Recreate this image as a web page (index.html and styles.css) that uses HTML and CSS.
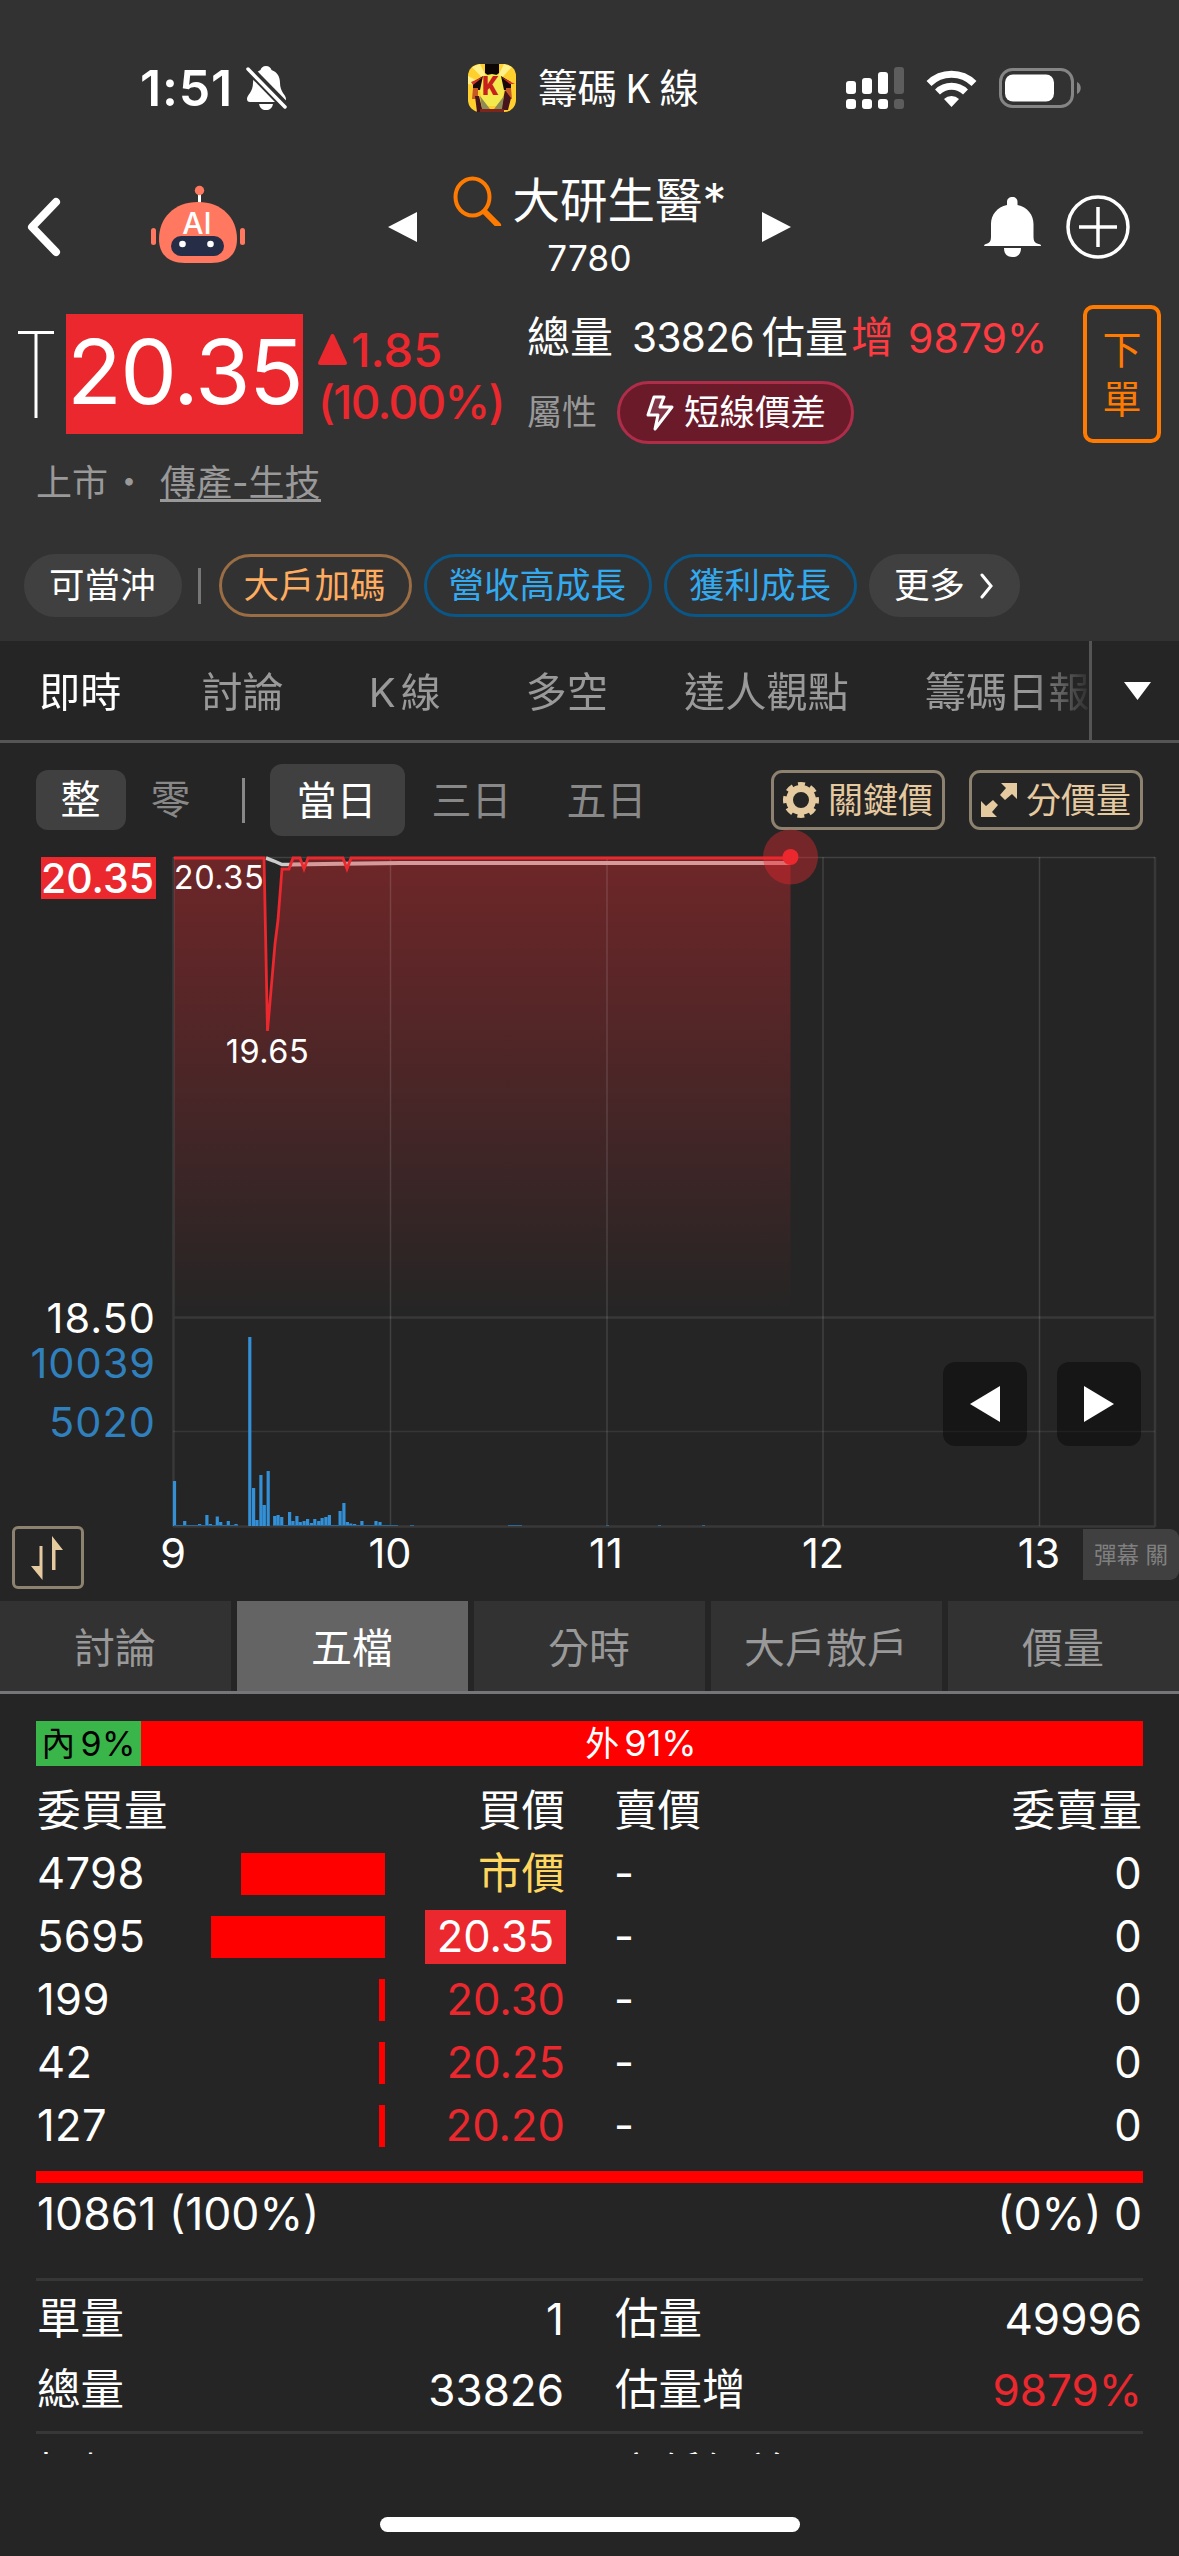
FILE: index.html
```html
<!DOCTYPE html>
<html lang="zh-Hant">

<head>
    <meta charset="UTF-8">
    <meta name="viewport" content="width=device-width, initial-scale=1.0">
    <title>大研生醫* 7780</title>
    <link rel="stylesheet" href="styles.css">
</head>

<body>
    <div class="header">
        <div class="status-bar">
            <span class="time">1:51</span>
            <svg class="mute" width="42" height="46" viewBox="0 0 42 46">
                <path d="M20 1c3 0 5 2 5.500 4 6 2 8.500 7 8.500 13 0 9 6 12 6 16 0 2-1 3-3 3H4c-2 0-3-1-3-3 0-4 6-7 6-16 0-6 2.500-11 7.500-13C15 3 17 1 20 1z" fill="#fff" />
                <path d="M13 39h14c-1 4-3 6-7 6s-6-2-7-6z" fill="#fff" />
                <path d="M0 1l43 44" stroke="#323232" stroke-width="9" />
                <path d="M2 4l37 38" stroke="#fff" stroke-width="3.500" stroke-linecap="round" />
            </svg>
            <svg class="app-icon" width="48" height="48" viewBox="0 0 48 48">
                <rect width="48" height="48" rx="12" fill="#ffcf2e" />
                <path d="M24 24L4 3l8-3zM24 24L36 0l8 3zM24 24L0 20v-8z" fill="#fff08a" />
                <path d="M17 0h14v9l-4 3h-6l-4-3z" fill="#0c0705" />
                <path d="M14 12l10-2 10 2 3 10-4 20H15l-4-20z" fill="#f3e84c" />
                <path d="M15 12L5 18v8l7 0zM33 12l10 6v8l-7 0z" fill="#18090c" />
                <path d="M3 18l12-5-10 8zM33 13l14 7-5 0z" fill="#d8332a" />
                <path d="M5 24h5v11H4zM38 24h5l1 11h-6z" fill="#c65a25" />
                <path d="M7 32l4 0 4 16H9zM37 26l6 8-3 12-7 0z" fill="#45141d" />
                <path d="M12 32l10 13H14zM36 32L26 45h8z" fill="#8e8a55" />
                <path d="M12 45h24v3H12z" fill="#7d241c" />
                <text class="icon-k" x="22" y="31">K</text>
            </svg>
            <span class="app-name">籌碼<span class="app-k">K</span>線</span>
            <svg class="signal" width="58" height="42" viewBox="0 0 58 42">
                <g fill="#fff">
                    <rect x="0" y="14" width="10" height="13" rx="3" />
                    <rect x="16" y="11" width="10" height="16" rx="3" />
                    <rect x="32" y="5" width="10" height="22" rx="3" />
                    <rect x="0" y="32" width="10" height="10" rx="3" />
                    <rect x="16" y="32" width="10" height="10" rx="3" />
                    <rect x="32" y="32" width="10" height="10" rx="3" />
                </g>
                <g fill="#5d5d5d">
                    <rect x="48" y="0" width="10" height="27" rx="3" />
                    <rect x="48" y="32" width="10" height="10" rx="3" />
                </g>
            </svg>
            <svg class="wifi" width="51" height="38" viewBox="0 0 51 38">
                <g fill="none" stroke="#fff" stroke-width="7">
                    <path d="M3 14.500a32 32 0 0 1 45 0" />
                    <path d="M11.500 23a20 20 0 0 1 28 0" />
                </g>
                <path d="M18 30a11 11 0 0 1 15 0L25.500 38z" fill="#fff" />
            </svg>
            <svg class="battery" width="83" height="40" viewBox="0 0 83 40">
                <rect x="1.500" y="1.500" width="72" height="37" rx="12" fill="none" stroke="#858585" stroke-width="3" />
                <rect x="6" y="6.500" width="49" height="27" rx="8" fill="#fff" />
                <path d="M78 14c5 2 5 10 0 12z" fill="#858585" />
            </svg>
        </div>

        <div class="nav">
            <svg class="back" width="34" height="60" viewBox="0 0 34 60">
                <path d="M29 5L5 30l24 25" fill="none" stroke="#fff" stroke-width="8" stroke-linecap="round" stroke-linejoin="round" />
            </svg>
            <svg class="robot" width="96" height="80" viewBox="0 0 96 80">
                <path d="M48.500 8v12" stroke="#fff" stroke-width="3" />
                <circle cx="48.500" cy="5.500" r="4.700" fill="#ff785f" />
                <rect x="0" y="43" width="5" height="17" rx="2.500" fill="#ff785f" />
                <rect x="89" y="43" width="5" height="17" rx="2.500" fill="#ff785f" />
                <path d="M47 17c24 0 39 16 39 37 0 16-10 24-26 24H34C18 78 8 70 8 54 8 33 23 17 47 17z" fill="#ff785f" />
                <rect x="20" y="51" width="53" height="20" rx="10" fill="#262d47" />
                <circle cx="31.500" cy="59" r="3.300" fill="#fff" />
                <circle cx="59.500" cy="59" r="3.300" fill="#fff" />
                <text class="robot-ai" x="46" y="49">AI</text>
            </svg>
            <svg class="prev" width="29" height="30" viewBox="0 0 29 30">
                <path d="M29 0v30L0 15z" fill="#fff" />
            </svg>
            <div class="stock">
                <div class="stock-name">
                    <svg width="50" height="50" viewBox="0 0 50 50">
                        <ellipse cx="19.500" cy="21" rx="17" ry="18.500" fill="none" stroke="#ff7a00" stroke-width="4" />
                        <path d="M32 36l13 13" stroke="#ff7a00" stroke-width="6" stroke-linecap="round" />
                    </svg>
                    <span>大研生醫*</span>
                </div>
                <div class="stock-code">7780</div>
            </div>
            <svg class="next" width="29" height="30" viewBox="0 0 29 30">
                <path d="M0 0v30l29-15z" fill="#fff" />
            </svg>
            <svg class="bell" width="58" height="60" viewBox="0 0 58 60">
                <path d="M28.500 0c3 0 5 2 5 5v3c10 2 16 10 16 19v12c0 5 1 7 5 8 3 .500 3 2 2 2H1c-1.500 0-1-1.500 1-2 4-1 5-3 5-8V27c0-9 6-17 16-19V5c0-3 2-5 5.500-5z" fill="#fff" />
                <path d="M20 51h17c0 6-3 9-8.500 9S20 57 20 51z" fill="#fff" />
            </svg>
            <svg class="plus" width="64" height="64" viewBox="0 0 64 64">
                <circle cx="32" cy="32" r="30" fill="none" stroke="#fff" stroke-width="3.500" />
                <path d="M13 32h38M32 12v40" stroke="#fff" stroke-width="3.500" />
            </svg>
        </div>

        <div class="quote">
            <svg class="candle" width="36" height="87" viewBox="0 0 36 87">
                <path d="M0 1.500h36M18 0v87" stroke="#fff" stroke-width="3" />
            </svg>
            <div class="price">20.35</div>
            <div class="change">
                <div>
                    <svg width="29" height="31" viewBox="0 0 29 31">
                        <path d="M14.500 2L27 29H2z" fill="#ea282e" stroke="#ea282e" stroke-width="4" stroke-linejoin="round" />
                    </svg>
                    <span>1.85</span>
                </div>
                <div class="percent">(10.00%)</div>
            </div>
            <div class="volume">
                <div class="volume-line">總量<span class="total">33826</span>估量<span class="up">增 <b>9879%</b></span></div>
                <div class="attr">
                    <span class="attr-label">屬性</span>
                    <span class="attr-pill">
                        <svg width="30" height="36" viewBox="0 0 30 36">
                            <path d="M9 2h10l-4 10h12L10 34l3-14H3z" fill="#833648" stroke="#fff" stroke-width="3" stroke-linejoin="round" />
                        </svg>
                        短線價差
                    </span>
                </div>
            </div>
            <div class="order-btn"><span>下</span><span>單</span></div>
        </div>

        <div class="industry">上市<span class="dot">・</span><span class="link">傳產-生技</span></div>

        <div class="chips">
            <span class="chip solid">可當沖</span>
            <span class="chip-divider"></span>
            <span class="chip orange">大戶加碼</span>
            <span class="chip blue">營收高成長</span>
            <span class="chip blue">獲利成長</span>
            <span class="chip solid">更多
                <svg width="14" height="26" viewBox="0 0 14 26">
                    <path d="M2 2l9 11-9 11" fill="none" stroke="#fff" stroke-width="3" stroke-linecap="round" />
                </svg>
            </span>
        </div>
    </div>

    <div class="tabs">
        <div class="tab-list">
            <span class="tab active">即時</span>
            <span class="tab discuss">討論</span>
            <span class="tab k-line">K<i></i>線</span>
            <span class="tab">多空</span>
            <span class="tab">達人觀點</span>
            <span class="tab">籌碼日報</span>
        </div>
        <div class="tab-more">
            <svg width="27" height="18" viewBox="0 0 27 18">
                <path d="M0 0h27L13.500 18z" fill="#fff" />
            </svg>
        </div>
    </div>

    <div class="controls">
        <span class="lot active">整</span>
        <span class="lot">零</span>
        <span class="controls-divider"></span>
        <span class="period active">當日</span>
        <span class="period">三日</span>
        <span class="period">五日</span>
        <span class="tool first">
            <svg width="36" height="36" viewBox="0 0 36 36">
                <circle cx="18" cy="18" r="11.500" fill="none" stroke="#e5caa0" stroke-width="7" />
                <circle cx="18" cy="18" r="16" fill="none" stroke="#e5caa0" stroke-width="4" stroke-dasharray="7 5.566" stroke-dashoffset="3.500" />
            </svg>
            關鍵價
        </span>
        <span class="tool">
            <svg width="36" height="36" viewBox="0 0 36 36">
                <g fill="#e5caa0">
                    <path d="M20 1h16v16l-5-5-7 6-5-5 6-7z" />
                    <path d="M16 35H0V19l5 5 7-6 5 5-6 7z" />
                </g>
            </svg>
            分價量
        </span>
    </div>

    <div class="chart">
        <svg class="plot" width="1179" height="759" viewBox="0 842 1179 759">
            <defs>
                <linearGradient id="fade" x1="0" y1="0" x2="0" y2="1">
                    <stop offset="0" stop-color="#ea282e" stop-opacity="0.37" />
                    <stop offset="1" stop-color="#ea282e" stop-opacity="0" />
                </linearGradient>
            </defs>

            <path d="M174 857.500h90l3.500 174 7.500-87 3-24 4-51h7l4-11.500h7l4 11.500 4-11.500h35l4 11.500 4-11.500h439.500V1316H174z" fill="url(#fade)" />

            <!-- grid -->
            <g fill="none" stroke="#fff" stroke-opacity="0.130" stroke-width="1.500">
                <path d="M173 857.500h982" />
                <path d="M390.500 857v669M607 857v669M823 857v669M1039.500 857v669" />
                <path d="M173 1431.500h982" stroke-opacity="0.080" />
                <path d="M173.500 857v670M1155 857v670M173 1317.500h982M173 1526.500h982" stroke-opacity="0.090" stroke-width="2.500" />
            </g>

            <!-- average price -->
            <path d="M266 858l8 3 8 3.500h10" fill="none" stroke="#ccc" stroke-width="3.500" />
            <path d="M291 864.500l50-.800 60-.700h389.500" fill="none" stroke="#d69a9b" stroke-width="4" />
            <path d="M174 858h90l3.500 173 7.500-87 3-24 4-51h7l4-11 7 0 4 11 4-11h35l4 11 4-11h439" fill="none" stroke="#ea282e" stroke-width="2.800" />

            <circle cx="790.500" cy="857" r="27.500" fill="#ea282e" fill-opacity="0.400" />
            <circle cx="790.500" cy="857" r="8" fill="#ea282e" />

            <!-- volume bars -->
            <path d="M174.500 1526v-45M184.700 1526v-5M199.600 1526v-2M206.900 1526v-11M210.400 1526v-2M217.300 1526v-9.500M220.700 1526v-4M228.300 1526v-5M236 1526v-2M249.800 1526v-189M253.600 1526v-38M257 1526v-6M260.900 1526v-51M264.300 1526v-21M268.200 1526v-55M274.700 1526v-10M278.100 1526v-11M281.700 1526v-9M289.600 1526v-14M293 1526v-5M296.900 1526v-10M300.300 1526v-4M304.100 1526v-5M307.600 1526v-7M311.400 1526v-3M314.800 1526v-7M318.700 1526v-5M322.100 1526v-8M325.900 1526v-9M329.400 1526v-11M340.100 1526v-15M343.900 1526v-23M347.400 1526v-4M350.800 1526v-2.500M354.600 1526v-2M361.900 1526v-5M376 1526v-5M380 1526v-4" stroke="#338fd6" stroke-width="3.200" />
            <path d="M174 1525.500h63M273 1525.500h125M410 1525.500h4M508 1525.500h14M606 1525.500h3M658 1525.500h3M702 1525.500h3" stroke="#2a6898" stroke-width="1.200" />

            <rect x="41" y="857" width="115" height="42" fill="#ea282e" />
            <g class="axis-y">
                <text class="top" x="154" y="893">20.35</text>
                <text x="156" y="1333">18.50</text>
                <text class="vol" x="156" y="1378">10039</text>
                <text class="vol" x="156" y="1437">5020</text>
            </g>
            <g class="axis-x">
                <text x="173" y="1568">9</text>
                <text x="390" y="1568">10</text>
                <text x="606" y="1568">11</text>
                <text x="823" y="1568">12</text>
                <text x="1039" y="1568">13</text>
            </g>
            <g class="mark">
                <text x="219" y="889">20.35</text>
                <text x="267.500" y="1063">19.65</text>
            </g>
        </svg>
        <div class="step left">
            <svg width="30" height="36" viewBox="0 0 30 36">
                <path d="M30 0v36L0 18z" fill="#fff" />
            </svg>
        </div>
        <div class="step right">
            <svg width="30" height="36" viewBox="0 0 30 36">
                <path d="M0 0v36l30-18z" fill="#fff" />
            </svg>
        </div>
        <div class="swap">
            <svg width="34" height="44" viewBox="0 0 34 44">
                <path d="M8.500 10h3v34L0 30h8.500zM21 0v34h3.500V14H32z" fill="#e5caa0" />
            </svg>
        </div>
        <div class="danmu">彈幕 關</div>
    </div>

    <div class="panel-tabs">
        <div class="panel-tab">討論</div>
        <div class="panel-tab active">五檔</div>
        <div class="panel-tab">分時</div>
        <div class="panel-tab">大戶散戶</div>
        <div class="panel-tab">價量</div>
    </div>

    <div class="book">
        <div class="ratio">
            <div class="inner">內<span>9%</span></div>
            <div class="outer">外<span>91%</span></div>
        </div>

        <div class="row head">
            <span class="qty">委買量</span><span class="bar-cell"></span><span class="bid">買價</span>
            <span class="ask">賣價</span><span class="ask-qty">委賣量</span>
        </div>
        <div class="row">
            <span class="qty">4798</span><span class="bar-cell"><i class="bar" style="width: 144px"></i></span><span class="bid market">市價</span>
            <span class="ask">-</span><span class="ask-qty">0</span>
        </div>
        <div class="row">
            <span class="qty">5695</span><span class="bar-cell"><i class="bar" style="width: 174px"></i></span><span class="bid limit">20.35</span>
            <span class="ask">-</span><span class="ask-qty">0</span>
        </div>
        <div class="row">
            <span class="qty">199</span><span class="bar-cell"><i class="bar" style="width: 6px"></i></span><span class="bid">20.30</span>
            <span class="ask">-</span><span class="ask-qty">0</span>
        </div>
        <div class="row">
            <span class="qty">42</span><span class="bar-cell"><i class="bar" style="width: 6px"></i></span><span class="bid">20.25</span>
            <span class="ask">-</span><span class="ask-qty">0</span>
        </div>
        <div class="row">
            <span class="qty">127</span><span class="bar-cell"><i class="bar" style="width: 6px"></i></span><span class="bid">20.20</span>
            <span class="ask">-</span><span class="ask-qty">0</span>
        </div>

        <div class="total-bar"></div>
        <div class="totals"><span>10861 (100%)</span><span>(0%) 0</span></div>

        <div class="stats">
            <div class="stat"><span>單量</span><span class="num">1</span></div>
            <div class="stat"><span>估量</span><span class="num">49996</span></div>
            <div class="stat"><span>總量</span><span class="num">33826</span></div>
            <div class="stat"><span>估量增</span><span class="num red">9879%</span></div>
        </div>
        <div class="stats clipped">
            <div class="stat"><span>振幅</span></div>
            <div class="stat"><span>高低價差</span></div>
        </div>
    </div>

    <div class="home"><div class="home-bar"></div></div>
</body>

</html>
```

FILE: styles.css
```css
* {
    box-sizing: border-box;
}

body {
    margin: 0;
    width: 1179px;
    height: 2556px;
    overflow: hidden;
    background: #252525;
    color: #fff;
    font-family: Inter, "Noto Sans CJK TC", sans-serif;
    font-size: 42px;
    line-height: 1;
    white-space: nowrap;
}

svg {
    display: block;
    flex-shrink: 0;
}

.header {
    height: 641px;
    background: #323232;
}

/* status bar */
.status-bar {
    display: flex;
    align-items: center;
    height: 153px;
    padding: 23px 0 0 140px;
}

.time {
    width: 106px;
    font-size: 50px;
    font-weight: 600;
    letter-spacing: 0.8px;
}

.app-icon {
    margin-left: 180px;
}

.icon-k {
    font: 900 25px Roboto, sans-serif;
    fill: #c8201c;
    text-anchor: middle;
}

.app-name {
    width: 308px;
    margin-left: 22px;
    font-size: 39.5px;
}

.app-k {
    margin: 0 9px 0 8px;
    font-family: "Noto Sans CJK TC", sans-serif;
}

.wifi {
    margin-left: 22px;
}

.battery {
    margin-left: 22px;
}

/* nav */
.nav {
    display: flex;
    align-items: center;
    height: 148px;
    padding-left: 27px;
}

.robot {
    margin: -4px 0 0 90px;
}

.robot-ai {
    font-size: 30px;
    font-weight: 500;
    fill: #fff;
    text-anchor: middle;
}

.prev {
    margin-left: 141px;
}

.stock {
    width: 345px;
    margin-top: -6px;
    text-align: center;
}

.stock-name {
    display: flex;
    justify-content: center;
    align-items: center;
    gap: 10px;
    height: 56px;
    font-size: 47.5px;
}

.stock-code {
    margin-top: 12px;
    font-size: 35px;
    letter-spacing: 0.3px;
}

.bell {
    margin-left: 193px;
}

.plus {
    margin-left: 24px;
}

/* quote */
.quote {
    display: flex;
    align-items: center;
    height: 138px;
    margin-top: 4px;
    padding-left: 18px;
}

.price {
    width: 237px;
    height: 120px;
    margin-left: 12px;
    background: #ea282e;
    font-size: 90px;
    line-height: 116px;
    letter-spacing: -1.6px;
    text-align: center;
}

.change {
    width: 209px;
    margin-left: 15px;
    padding-top: 3px;
    color: #ea282e;
    font-size: 47px;
    font-weight: 500;
}

.change div {
    display: flex;
    align-items: center;
    gap: 4px;
    height: 53px;
}

.change .percent {
    font-size: 46px;
    letter-spacing: -1.7px;
}

.volume {
    width: 556px;
    height: 138px;
}

.volume-line {
    display: flex;
    height: 64px;
    font-size: 43px;
    line-height: 65px;
}

.volume-line .total {
    margin: 0 8px 0 19px;
    font-size: 40.5px;
    letter-spacing: -0.6px;
}

.volume-line .up {
    margin-left: 3px;
    color: #ff3b42;
}

.volume-line b {
    margin-left: 2px;
    font-size: 41px;
    font-weight: 400;
}

.attr {
    display: flex;
    align-items: center;
    margin-top: 12px;
    font-size: 35px;
}

.attr-label {
    width: 90px;
    color: #999;
}

.attr-pill {
    display: flex;
    align-items: center;
    gap: 9px;
    height: 63px;
    padding: 0 25px;
    border: 3px solid #b02d4a;
    border-radius: 32px;
    background: #6b1a2a;
    font-size: 35.5px;
}

.order-btn {
    display: flex;
    flex-direction: column;
    align-items: center;
    justify-content: center;
    gap: 10px;
    width: 78px;
    height: 138px;
    border: 4px solid #ff7a00;
    border-radius: 10px;
    color: #ff7a00;
    font-size: 39px;
}

.industry {
    display: flex;
    height: 60px;
    margin-top: 11px;
    padding-left: 36px;
    color: #999;
    font-size: 36px;
    line-height: 58px;
}

.industry .dot {
    width: 52px;
    padding-left: 3px;
}

.industry .link {
    height: 48px;
    border-bottom: 3px solid #999;
}

.chips {
    display: flex;
    align-items: center;
    margin-top: 40px;
    padding-left: 24px;
}

.chip {
    display: flex;
    align-items: center;
    gap: 15px;
    height: 63px;
    margin-right: 12px;
    padding: 1px 23px 0 22px;
    border: 3px solid #404040;
    border-radius: 32px;
    font-size: 35.5px;
}

.chip.solid {
    background: #404040;
}

.chip.orange {
    border-color: #9a6d44;
    color: #ffac5f;
}

.chip.blue {
    border-color: #0a5686;
    color: #33aaf0;
}

.chip-divider {
    width: 3px;
    height: 36px;
    margin: 0 18px 0 4px;
    background: #777;
}

/* page tabs */
.tabs {
    display: flex;
    height: 102px;
    border-bottom: 3px solid #555;
}

.tab-list {
    display: flex;
    align-items: center;
    gap: 76px;
    width: 1089px;
    padding: 4px 0 0 39px;
    overflow: hidden;
    -webkit-mask-image: linear-gradient(to right, #000 1030px, transparent 1095px);
    mask-image: linear-gradient(to right, #000 1030px, transparent 1095px);
}

.tab {
    color: #999;
    font-size: 41.2px;
}

.tab.active {
    color: #fff;
}

.tab.discuss {
    margin-left: 4px;
}

.tab.k-line {
    display: flex;
    margin: 0 9px;
    font-size: 40px;
}

.k-line i {
    width: 5px;
}

.tab-more {
    display: flex;
    align-items: center;
    flex: 1;
    padding-left: 32px;
    border-left: 3px solid #555;
}

/* chart controls */
.controls {
    display: flex;
    align-items: center;
    height: 99px;
    padding: 15px 0 0 36px;
    color: #888;
    font-size: 40px;
}

.lot {
    width: 90px;
    height: 60px;
    padding-right: 1px;
    border-radius: 12px;
    line-height: 60px;
    text-align: center;
}

.controls-divider {
    width: 3px;
    height: 45px;
    margin: 0 25px 0 26px;
    background: #888;
}

.period {
    width: 135px;
    height: 72px;
    padding-right: 2px;
    border-radius: 12px;
    line-height: 73px;
    text-align: center;
}

.lot.active,
.period.active {
    background: #404040;
    color: #fff;
}

.tool {
    display: flex;
    align-items: center;
    gap: 9px;
    width: 174px;
    height: 60px;
    margin-left: 24px;
    padding-left: 9px;
    border: 3px solid #8d826f;
    border-radius: 11px;
    color: #e5caa0;
    font-size: 35px;
}

.tool.first {
    margin-left: 96px;
}

/* chart */
.chart {
    position: relative;
    height: 759px;
}

.plot {
    overflow: visible;
}

.plot text {
    fill: #fff;
    font-size: 41.5px;
}

.axis-y text {
    text-anchor: end;
    letter-spacing: 1px;
}

.plot .top {
    font-size: 41px;
    font-weight: 500;
    letter-spacing: 0;
}

.plot .vol {
    fill: #3080bd;
}

.axis-x text,
.mark text {
    text-anchor: middle;
}

.plot .mark text {
    font-size: 32.5px;
    letter-spacing: 0.5px;
}

.step {
    display: flex;
    align-items: center;
    justify-content: center;
    position: absolute;
    top: 520px;
    width: 84px;
    height: 84px;
    border-radius: 12px;
    background: rgba(0, 0, 0, 0.4);
}

.step.left {
    left: 943px;
}

.step.right {
    left: 1057px;
}

.swap {
    display: flex;
    align-items: center;
    justify-content: center;
    position: absolute;
    top: 684px;
    left: 12px;
    width: 72px;
    height: 63px;
    border: 3px solid #8d826f;
    border-radius: 6px;
}

.danmu {
    position: absolute;
    top: 687px;
    left: 1083px;
    width: 96px;
    height: 51px;
    border-radius: 0 9px 9px 0;
    background: #404040;
    color: #808080;
    font-size: 22.5px;
    line-height: 52px;
    text-align: center;
}

/* panel tabs */
.panel-tabs {
    display: flex;
    gap: 6px;
    height: 93px;
    border-bottom: 3px solid #75757a;
}

.panel-tab {
    flex: 1;
    padding-right: 1px;
    background: #323232;
    color: #999;
    font-size: 41px;
    line-height: 94px;
    text-align: center;
}

.panel-tab.active {
    background: #646464;
    color: #fff;
}

/* order book */
.book {
    height: 760px;
    padding: 27px 36px 0;
    overflow: hidden;
    font-size: 43.5px;
}

.ratio {
    display: flex;
    height: 45px;
    font-size: 34px;
    line-height: 45px;
    text-align: center;
}

.ratio .inner {
    width: 105px;
    background: #3ab54a;
    color: #000;
    letter-spacing: 0.3px;
}

.ratio .outer {
    flex: 1;
    padding-right: 2px;
    background: #f00;
}

.ratio span {
    margin-left: 5px;
}

.outer span {
    font-size: 36px;
}

.row {
    display: flex;
    align-items: center;
    height: 63px;
    letter-spacing: 0.4px;
}

.row.head {
    height: 76px;
    padding-top: 14px;
    letter-spacing: 0;
}

.qty {
    width: 172px;
    padding-left: 1px;
}

.bar-cell {
    display: flex;
    justify-content: flex-end;
    width: 177px;
}

.bar {
    height: 42px;
    background: #f00;
}

.bid {
    margin-left: auto;
    color: #ea282e;
    letter-spacing: 0;
}

.head .bid {
    color: #fff;
}

.bid.market {
    color: #ffd75e;
}

.bid.limit {
    width: 141px;
    height: 54px;
    margin-right: -1px;
    background: #ea282e;
    color: #fff;
    line-height: 53px;
    text-align: center;
}

.ask {
    width: 266px;
    margin-left: 49px;
}

.ask-qty {
    width: 263px;
    padding-right: 1px;
    text-align: right;
}

.total-bar {
    height: 12px;
    margin-top: 14px;
    background: #f00;
}

.totals {
    display: flex;
    justify-content: space-between;
    height: 95px;
    padding: 9px 1px 0 1px;
    font-size: 44.5px;
    line-height: 44px;
}

.stats {
    display: grid;
    grid-template-columns: 529px 1fr;
    grid-auto-rows: 71px;
    align-content: start;
    column-gap: 49px;
    height: 153px;
    padding-top: 2px;
    border-top: 3px solid #373737;
}

.stats.clipped {
    padding-top: 4px;
}

.stat {
    display: flex;
    justify-content: space-between;
    align-items: center;
    padding: 0 1px 0 1px;
}

.stat .num {
    font-size: 44px;
}

.stat .red {
    color: #ea282e;
}

.home {
    display: flex;
    justify-content: center;
    height: 102px;
    padding-top: 63px;
}

.home-bar {
    width: 420px;
    height: 15px;
    border-radius: 8px;
    background: #fff;
}
```
